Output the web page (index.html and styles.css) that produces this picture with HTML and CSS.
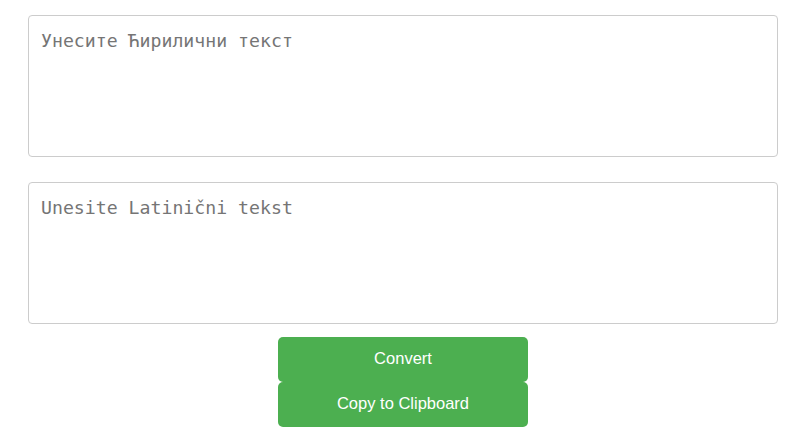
FILE: index.html
```html
<!DOCTYPE html>
<html>
<head>
<meta charset="utf-8">
<link rel="stylesheet" href="styles.css">
</head>
<body>
<div class="container">
  <textarea class="box" placeholder="Унесите Ћирилични текст"></textarea>
  <textarea class="box" placeholder="Unesite Latinični tekst"></textarea>
  <div class="actions">
    <button class="btn">Convert</button>
    <button class="btn">Copy to Clipboard</button>
  </div>
</div>
</body>
</html>
```
FILE: styles.css
```css
html, body {
  margin: 0;
  padding: 0;
  background: #fff;
}
.container {
  padding: 15px 32px 0 28px;
  display: flex;
  flex-direction: column;
}
.box {
  box-sizing: border-box;
  width: 750px;
  height: 142px;
  margin: 0 0 25px 0;
  padding: 14px 12px 12px 12px;
  border: 1px solid #ccc;
  border-radius: 4px;
  font-family: "DejaVu Sans Mono", monospace;
  font-size: 18.2px;
  line-height: 22px;
  resize: none;
  outline: none;
  display: block;
}
.box:nth-of-type(2) {
  margin-bottom: 13px;
}
.box::placeholder {
  color: #757575;
}
.actions {
  display: flex;
  flex-direction: column;
  align-items: center;
  width: 750px;
}
.btn {
  width: 250px;
  height: 45px;
  background: #4caf50;
  color: #fff;
  border: none;
  border-radius: 5px;
  font-family: "Liberation Sans", Arial, sans-serif;
  font-size: 16.5px;
  padding: 0 0 2px 0;
  margin: 0;
  cursor: pointer;
}
```
